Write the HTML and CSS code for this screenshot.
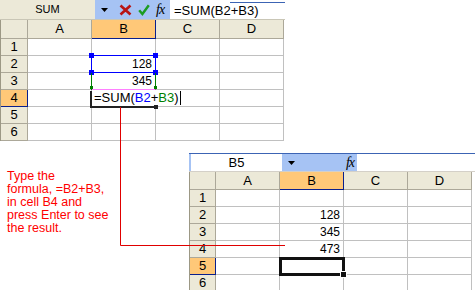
FILE: index.html
```html
<!DOCTYPE html>
<html lang="en">
<head>
  <meta charset="UTF-8">
  <title>Excel SUM formula</title>
  <link rel="stylesheet" href="styles.css">
</head>
<body>
  <div class="page">
    <div class="sheet sheet-top">
      <div class="bar">
        <div class="namebox">SUM</div>
        <div class="tools">
          <svg class="drop" width="8" height="4" viewBox="0 0 8 4"><polygon points="0,0 7,0 3.5,4" fill="#000"/></svg>
          <svg class="icon" width="13" height="12" viewBox="0 0 13 12"><path d="M1.5 1.5 L11.5 10.5 M11.5 1.5 L1.5 10.5" stroke="#b81414" stroke-width="2.6" fill="none"/></svg>
          <svg class="icon" width="12" height="12" viewBox="0 0 12 12"><path d="M1.2 6.2 L4.4 10 L10.8 1.2" stroke="#1c9c22" stroke-width="2.4" fill="none"/></svg>
          <span class="fx">fx</span>
        </div>
        <div class="formula">=SUM(B2+B3)</div>
      </div>
      <div class="grid">
        <div class="hd corner"></div>
        <div class="hd">A</div>
        <div class="hd sel">B</div>
        <div class="hd">C</div>
        <div class="hd">D</div>

        <div class="rh">1</div><div class="c"></div><div class="c"></div><div class="c"></div><div class="c"></div>
        <div class="rh">2</div><div class="c"></div><div class="c num ref-blue">128</div><div class="c"></div><div class="c"></div>
        <div class="rh">3</div><div class="c"></div><div class="c num ref-green">345</div><div class="c"></div><div class="c"></div>
        <div class="rh sel">4</div><div class="c"></div>
        <div class="c edit">=SUM(<span class="blue">B2</span>+<span class="green">B3</span>)<span class="caret"></span></div>
        <div class="c"></div><div class="c"></div>
        <div class="rh">5</div><div class="c"></div><div class="c"></div><div class="c"></div><div class="c"></div>
        <div class="rh">6</div><div class="c"></div><div class="c"></div><div class="c"></div><div class="c"></div>
      </div>
    </div>

    <div class="lower">
      <p class="note">Type the<br>formula, =B2+B3,<br>in cell B4 and<br>press Enter to see<br>the result.</p>

      <div class="sheet sheet-bottom">
        <div class="bar">
          <div class="namebox">B5</div>
          <div class="tools">
            <svg class="drop" width="8" height="4" viewBox="0 0 8 4"><polygon points="0,0 7,0 3.5,4" fill="#000"/></svg>
            <span class="fx">fx</span>
          </div>
          <div class="formula"></div>
        </div>
        <div class="grid">
          <div class="hd corner"></div>
          <div class="hd">A</div>
          <div class="hd sel">B</div>
          <div class="hd">C</div>
          <div class="hd">D</div>

          <div class="rh">1</div><div class="c"></div><div class="c"></div><div class="c"></div><div class="c"></div>
          <div class="rh">2</div><div class="c"></div><div class="c num">128</div><div class="c"></div><div class="c"></div>
          <div class="rh">3</div><div class="c"></div><div class="c num">345</div><div class="c"></div><div class="c"></div>
          <div class="rh">4</div><div class="c"></div><div class="c num">473</div><div class="c"></div><div class="c"></div>
          <div class="rh sel">5</div><div class="c"></div><div class="c active"></div><div class="c"></div><div class="c"></div>
          <div class="rh">6</div><div class="c"></div><div class="c"></div><div class="c"></div><div class="c"></div>
        </div>
      </div>
    </div>

    <!-- callout line from the edited cell to the result -->
    <svg class="connector" width="475" height="300">
      <path d="M120.5 107 V245.5 H285" stroke="#e00000" stroke-width="1" fill="none"/>
    </svg>
  </div>
</body>
</html>
```

FILE: styles.css
```css
body {
  margin: 0;
  background: #fff;
  font-family: "Liberation Sans", Arial, sans-serif;
  color: #000;
}
.page {
  position: relative;
  width: 475px;
  height: 300px;
  overflow: hidden;
}
.sheet {
  display: flex;
  flex-direction: column;
}
.sheet-top {
  width: 285px;
}
.bar {
  display: flex;
  height: 20px;
  box-sizing: border-box;
  border-bottom: 1px solid #c9c6b6;
}
.namebox {
  width: 95px;
  background: #ece9d8;
  font-size: 11px;
  line-height: 19px;
  text-align: center;
}
.tools {
  display: flex;
  align-items: center;
  background: #a6c3f4;
}
.sheet-top .tools {
  width: 75px;
  gap: 6px;
  padding-left: 6px;
  box-sizing: border-box;
}
.drop {
  margin-right: 4px;
}
.fx {
  font-family: "Liberation Serif", "Times New Roman", serif;
  font-style: italic;
  font-size: 14px;
  letter-spacing: -1px;
  line-height: 19px;
}
.formula {
  flex: 1;
  position: relative;
  font-size: 13px;
  line-height: 21px;
  padding-left: 4px;
  white-space: nowrap;
}
.sheet-top .formula::before {
  content: "";
  position: absolute;
  top: 2px;
  left: 60px;
  right: 0;
  border-top: 1px solid #3c64b4;
}

.grid {
  display: grid;
  grid-template-columns: 27px repeat(4, 64px);
  grid-template-rows: 19px;
  grid-auto-rows: 17px;
  border-left: 1px solid #9c9885;
  width: 284px;
  box-sizing: border-box;
  font-size: 12px;
}
.c,
.hd,
.rh {
  box-sizing: border-box;
  border-right: 1px solid #c0c0c0;
  border-bottom: 1px solid #c0c0c0;
  line-height: 16px;
  white-space: nowrap;
}
.hd,
.rh {
  background: #ece9d8;
  border-color: #aca899;
  text-align: center;
  font-size: 13px;
}
.hd {
  line-height: 18px;
}
.hd.sel {
  background: #ffc878;
  border-bottom-color: #0a1f8c;
  border-right-color: #0a1f8c;
}
.rh.sel {
  background: #ffc878;
  border-right-color: #0a1f8c;
  border-bottom-color: #0a1f8c;
}
.num {
  text-align: right;
  padding-right: 3px;
}

/* range references while editing */
.ref-blue {
  position: relative;
  border-color: #0000ff;
  box-shadow: -1px -1px 0 #0000ff;
}
.ref-blue::before {
  content: "";
  position: absolute;
  left: -3px;
  top: -3px;
  width: 5px;
  height: 5px;
  background: #0000ff;
  box-shadow: 64px 0 0 #0000ff, 0 17px 0 #0000ff, 64px 17px 0 #0000ff;
}
.ref-green {
  position: relative;
  border-right-color: #008000;
  border-bottom-color: #ff80ff;
  box-shadow: -1px 0 0 #008000;
}
.ref-green::before {
  content: "";
  position: absolute;
  left: -2px;
  top: 13px;
  width: 3px;
  height: 3px;
  background: #008000;
  box-shadow: 64px 0 0 #008000;
}
.edit {
  position: relative;
  font-size: 13px;
  padding-left: 2px;
  border-right-color: transparent;
  border-bottom-color: #222;
  box-shadow: -2px 1px 0 #222;
}
.edit::after {
  content: "";
  position: absolute;
  right: -3px;
  bottom: -3px;
  width: 4px;
  height: 4px;
  background: #222;
}
.blue {
  color: #0000ff;
}
.green {
  color: #008000;
}
.caret {
  display: inline-block;
  width: 1px;
  height: 14px;
  margin-left: 1px;
  background: #000;
  vertical-align: -3px;
}

.lower {
  display: flex;
  margin-top: 12px;
}
.note {
  margin: 0;
  width: 189px;
  padding: 17px 0 0 7px;
  box-sizing: border-box;
  color: #ff0000;
  font-size: 12.5px;
  line-height: 13px;
}
.sheet-bottom {
  width: 286px;
  height: 137px;
  overflow: hidden;
}
.sheet-bottom .bar {
  height: 19px;
  border-top: 1px solid #3c64b4;
  border-bottom-color: #d4d0c8;
}
.sheet-bottom .namebox {
  width: 93px;
  background: #fff;
  border-left: 2px solid #a6c3f4;
  box-sizing: border-box;
  font-size: 13px;
  line-height: 17px;
}
.sheet-bottom .tools {
  width: 75px;
  padding-left: 6px;
  justify-content: space-between;
  box-sizing: border-box;
  padding-right: 3px;
}
.sheet-bottom .grid {
  grid-template-columns: 26px repeat(4, 64px);
  grid-template-rows: 18px;
  width: 283px;
}
.sheet-bottom .hd {
  line-height: 17px;
}
.active {
  position: relative;
  outline: 3px solid #111;
  outline-offset: -2px;
}
.active::after {
  content: "";
  position: absolute;
  right: -3px;
  bottom: -3px;
  width: 5px;
  height: 5px;
  background: #111;
  outline: 1px solid #fff;
}

.connector {
  position: absolute;
  top: 0;
  left: 0;
  pointer-events: none;
}
```
